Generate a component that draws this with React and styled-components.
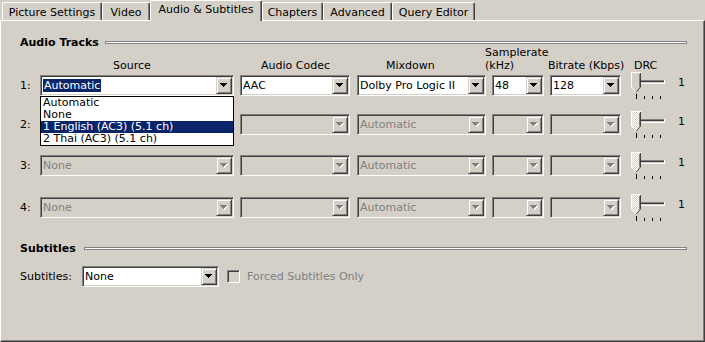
import React from "react";
import styled, { createGlobalStyle } from "styled-components";

const GlobalStyle = createGlobalStyle`
  html, body {
    margin : 0;
    padding : 0;
  }
  body {
    background : #d4d0c8;
    font-family : "DejaVu Sans", Tahoma, sans-serif;
    font-size : 11px;
    color : #000;
    width : 705px;
    height : 342px;
    overflow : hidden;
  }
`;

const Window = styled.div`
    width : 705px;
    height : 342px;
    display : flex;
    flex-direction : column;
    background : #d4d0c8;
`;

const TabStrip = styled.div`
    height : 20px;
    display : flex;
    align-items : flex-end;
    padding-left : 2px;
    position : relative;
    z-index : 2;
`;

const Tab = styled.div`
    box-sizing : border-box;
    width : ${p => p.$w}px;
    height : ${p => p.$active ? 21 : 18}px;
    margin-bottom : ${p => p.$active ? -1 : 0}px;
    padding-top : ${p => p.$active ? 2 : 3}px;
    border-top : 1px solid #fff;
    border-left : 1px solid #fff;
    border-right : 1px solid #404040;
    box-shadow : inset -1px 0 #808080;
    border-radius : 2px 2px 0 0;
    background : #d4d0c8;
    display : flex;
    justify-content : center;
    line-height : 13px;
    white-space : nowrap;
`;

const Panel = styled.div`
    flex : 1;
    box-sizing : border-box;
    border-top : 1px solid #fff;
    border-left : 1px solid #fff;
    border-right : 1px solid #404040;
    border-bottom : 1px solid #404040;
    box-shadow : inset -1px -1px #808080;
    padding : 15px 17px 0 19px;
    display : flex;
    flex-direction : column;
`;

const SectionHeader = styled.div`
    display : flex;
    align-items : center;
    gap : ${p => p.$gap}px;
    height : 13px;
    margin-top : ${p => p.$top}px;
`;

const SectionTitle = styled.span`
    font-weight : bold;
    line-height : 13px;
    white-space : nowrap;
`;

const Rule = styled.div`
    flex : 1;
    height : 1px;
    border : 1px solid #808080;
    background : #fff;
`;

const ColumnHeaders = styled.div`
    display : flex;
    align-items : flex-end;
    height : 26px;
    margin-top : -3px;
    padding-left : 93px;
`;

const ColumnLabel = styled.div`
    width : ${p => p.$w ? `${p.$w}px` : "auto"};
    line-height : 13px;
    white-space : nowrap;
`;

const TrackRow = styled.div`
    display : flex;
    align-items : flex-start;
    height : 32px;
    margin-top : ${p => p.$space}px;
`;

const RowLabel = styled.div`
    width : 20px;
    height : 21px;
    margin-top : 3px;
    line-height : 21px;
`;

const ComboWrap = styled.div`
    position : relative;
    margin-left : ${p => p.$ml || 0}px;
    margin-top : ${p => p.$mt || 0}px;
`;

const ComboBox = styled.div`
    box-sizing : border-box;
    width : ${p => p.$w}px;
    height : 21px;
    display : flex;
    border : 1px solid;
    border-color : #808080 #fff #fff #808080;
    box-shadow : inset 1px 1px #404040, inset -1px -1px #d4d0c8;
    padding : 1px;
    background : ${p => p.$disabled ? "#d4d0c8" : "#fff"};
    color : ${p => p.$disabled ? "#808080" : "#000"};
`;

const ComboText = styled.div`
    flex : 1;
    display : flex;
    align-items : center;
    padding-left : 1px;
    line-height : 13px;
    white-space : nowrap;
    overflow : hidden;
`;

const Selected = styled.span`
    background : #0a246a;
    color : #fff;
    padding : 0 1px;
`;

const DropButton = styled.div`
    box-sizing : border-box;
    width : 16px;
    height : 17px;
    background : #d4d0c8;
    border : 1px solid;
    border-color : #d4d0c8 #404040 #404040 #d4d0c8;
    box-shadow : inset 1px 1px #fff, inset -1px -1px #808080;
    display : flex;
    align-items : center;
    justify-content : center;
`;

const DropList = styled.div`
    position : absolute;
    top : 100%;
    left : 0;
    box-sizing : border-box;
    width : 100%;
    border : 1px solid #000;
    background : #fff;
    z-index : 5;
`;

const DropItem = styled.div`
    height : 12px;
    line-height : 12px;
    padding-left : 2px;
    white-space : nowrap;
    background : ${p => p.$hot ? "#0a246a" : "transparent"};
    color : ${p => p.$hot ? "#fff" : "#000"};
`;

const SliderBox = styled.div`
    margin-left : 9px;
    width : 36px;
    height : 32px;
`;

const SliderValue = styled.div`
    margin-left : 12px;
    margin-top : 4px;
    line-height : 13px;
`;

const SubtitleRow = styled.div`
    display : flex;
    align-items : center;
    height : 21px;
    margin-top : 11px;
`;

const FieldLabel = styled.div`
    width : 62px;
    line-height : 13px;
`;

const CheckBox = styled.div`
    box-sizing : border-box;
    width : 13px;
    height : 13px;
    margin-left : 8px;
    border : 1px solid;
    border-color : #808080 #fff #fff #808080;
    box-shadow : inset 1px 1px #404040, inset -1px -1px #d4d0c8;
    background : #d4d0c8;
`;

const CheckLabel = styled.div`
    margin-left : 7px;
    color : #808080;
    line-height : 13px;
`;

const arrowPath = "M0 0h7v1h-1v1h-1v1h-1v1h-1v-1h-1v-1h-1v-1h-1z";

const Arrow = ({ disabled }) => (
    <svg width="8" height="5" viewBox="0 0 8 5">
        {disabled && <path d={arrowPath} transform="translate(1 1)" fill="#fff" />}
        <path d={arrowPath} fill={disabled ? "#808080" : "#000"} />
    </svg>
);

const Combo = ({ w, value, disabled, selected, ml, mt, children }) => (
    <ComboWrap $ml={ml} $mt={mt}>
        <ComboBox $w={w} $disabled={disabled}>
            <ComboText>{selected ? <Selected>{value}</Selected> : value}</ComboText>
            <DropButton><Arrow disabled={disabled} /></DropButton>
        </ComboBox>
        {children}
    </ComboWrap>
);

const DrcSlider = ({ disabled, id }) => (
    <SliderBox>
        <svg width="36" height="32" viewBox="0 0 36 32" shapeRendering="crispEdges">
            <defs>
                <pattern id={`dither${id}`} width="2" height="2" patternUnits="userSpaceOnUse">
                    <rect width="2" height="2" fill="#d4d0c8" />
                    <rect width="1" height="1" fill="#fff" />
                    <rect x="1" y="1" width="1" height="1" fill="#fff" />
                </pattern>
            </defs>
            {/* track */}
            <rect x="3" y="8" width="32" height="1" fill="#808080" />
            <rect x="3" y="9" width="31" height="1" fill="#404040" />
            <rect x="3" y="10" width="31" height="1" fill="#d4d0c8" />
            <rect x="3" y="11" width="32" height="1" fill="#fff" />
            <rect x="34" y="8" width="1" height="4" fill="#fff" />
            {/* thumb */}
            <polygon points="1,0 11,0 11,15 6,21 1,15" fill={disabled ? `url(#dither${id})` : "#d4d0c8"} shapeRendering="auto" />
            <path d="M1.5 15V0.5H10.5" stroke="#fff" fill="none" />
            <path d="M1.5 15L6 20.5" stroke="#fff" fill="none" shapeRendering="auto" />
            <path d="M10.5 0.5V15" stroke="#404040" fill="none" />
            <path d="M9.5 1.5V14.5" stroke="#808080" fill="none" />
            <path d="M10.5 15L6 20.5" stroke="#404040" fill="none" shapeRendering="auto" />
            {/* ticks */}
            {[6, 14, 22, 30].map(x => (
                <rect key={x} x={x} y={x === 6 ? 22 : 24} width="1" height={x === 6 ? 5 : 3} fill="#000" />
            ))}
        </svg>
    </SliderBox>
);

const tabs = [
    { name : "Picture Settings", w : 100 },
    { name : "Video", w : 48 },
    { name : "Audio & Subtitles", w : 112, active : true },
    { name : "Chapters", w : 61 },
    { name : "Advanced", w : 69 },
    { name : "Query Editor", w : 83 },
];

// row 2's source box sits under the open list, so it shows nothing
const tracks = [
    { n : 1, source : "Automatic", codec : "AAC", mix : "Dolby Pro Logic II", rate : "48", bitrate : "128", on : true, space : 0 },
    { n : 2, source : "", codec : "", mix : "Automatic", rate : "", bitrate : "", on : false, space : 7 },
    { n : 3, source : "None", codec : "", mix : "Automatic", rate : "", bitrate : "", on : false, space : 9 },
    { n : 4, source : "None", codec : "", mix : "Automatic", rate : "", bitrate : "", on : false, space : 10 },
];

const sourceOptions = ["Automatic", "None", "1 English (AC3) (5.1 ch)", "2 Thai (AC3) (5.1 ch)"];

class App extends React.Component {
    render() {
        return (
            <Window>
                <GlobalStyle />
                <TabStrip>
                    {tabs.map(t => (
                        <Tab key={t.name} $w={t.w} $active={t.active}>{t.name}</Tab>
                    ))}
                </TabStrip>
                <Panel>
                    <SectionHeader $top={0} $gap={6}>
                        <SectionTitle>Audio Tracks</SectionTitle>
                        <Rule />
                    </SectionHeader>
                    <ColumnHeaders>
                        <ColumnLabel $w={148}>Source</ColumnLabel>
                        <ColumnLabel $w={125}>Audio Codec</ColumnLabel>
                        <ColumnLabel $w={99}>Mixdown</ColumnLabel>
                        <ColumnLabel $w={63}>Samplerate<br />(kHz)</ColumnLabel>
                        <ColumnLabel $w={86}>Bitrate (Kbps)</ColumnLabel>
                        <ColumnLabel>DRC</ColumnLabel>
                    </ColumnHeaders>
                    {tracks.map(t => (
                        <TrackRow key={t.n} $space={t.space}>
                            <RowLabel>{t.n}:</RowLabel>
                            <Combo w={194} mt={3} value={t.source} disabled={!t.on} selected={t.on}>
                                {t.on ? (
                                    <DropList>
                                        {sourceOptions.map((o, i) => (
                                            <DropItem key={o} $hot={i === 2}>{o}</DropItem>
                                        ))}
                                    </DropList>
                                ) : null}
                            </Combo>
                            <Combo w={110} ml={6} mt={3} value={t.codec} disabled={!t.on} />
                            <Combo w={129} ml={7} mt={3} value={t.mix} disabled={!t.on} />
                            <Combo w={52} ml={6} mt={3} value={t.rate} disabled={!t.on} />
                            <Combo w={71} ml={6} mt={3} value={t.bitrate} disabled={!t.on} />
                            <DrcSlider disabled={!t.on} id={t.n} />
                            <SliderValue>1</SliderValue>
                        </TrackRow>
                    ))}
                    <SectionHeader $top={16} $gap={8}>
                        <SectionTitle>Subtitles</SectionTitle>
                        <Rule />
                    </SectionHeader>
                    <SubtitleRow>
                        <FieldLabel>Subtitles:</FieldLabel>
                        <Combo w={137} value="None" />
                        <CheckBox />
                        <CheckLabel>Forced Subtitles Only</CheckLabel>
                    </SubtitleRow>
                </Panel>
            </Window>
        );
    }
}

export default App;
